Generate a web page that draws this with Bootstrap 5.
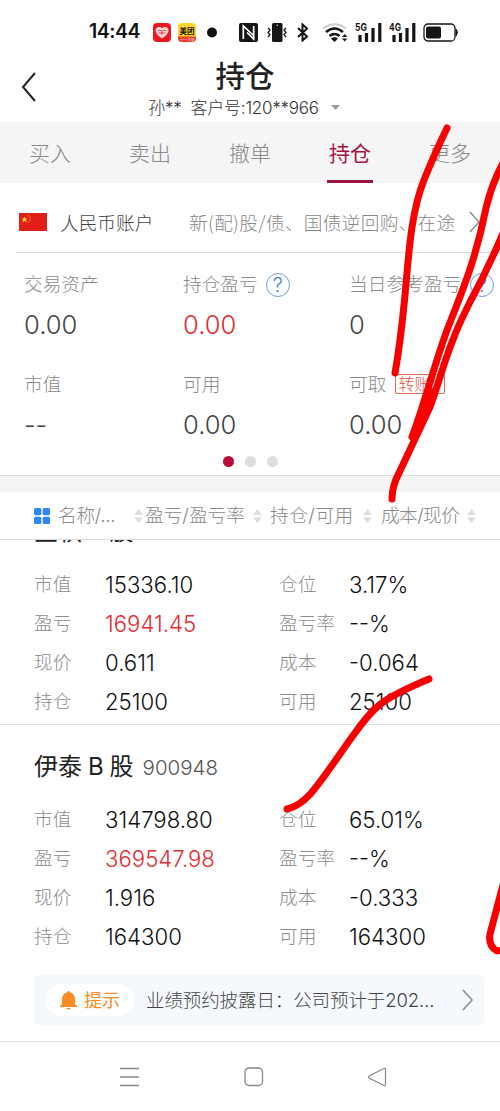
<!DOCTYPE html>
<html lang="zh-CN">
<head>
<meta charset="utf-8">
<meta name="viewport" content="width=device-width, initial-scale=1">
<title>持仓</title>
<link href="https://cdn.jsdelivr.net/npm/bootstrap@5.3.0/dist/css/bootstrap.min.css" rel="stylesheet">
<style>
body{font-family:Inter,"Noto Sans CJK SC",sans-serif;font-weight:300;background:#fff;color:#333;overflow:hidden}
.screen{width:500px;height:1111px;overflow:hidden}
svg{display:block;flex:none}
.cjk{font-family:"Noto Sans CJK SC",sans-serif}
.statusbar{height:60px;padding:4px 0 0 89px}
.clock{font-size:19.5px;font-weight:600;color:#111;width:64px;letter-spacing:-.5px}
.apphead{height:62px}
.back{position:absolute;left:21px;top:12px}
.apphead h1{font-size:29.5px;line-height:30px;font-weight:500;margin:-1px 0 0 -10px;color:#222}
.client{font-size:17px;line-height:20px;margin-top:9px;color:#333;white-space:pre;margin-left:-9px;letter-spacing:-.25px}
.tabs{height:61px;background:#f5f5f5;color:#888;font-size:21px}
.tabs a{flex:1;text-align:center;line-height:61px;height:61px;color:inherit;text-decoration:none}
.tabs a.active{color:#a5123f;font-weight:400}
.tabs a.active::after{content:"";display:block;width:46px;height:3px;margin:-3px auto 0;background:#9b123d}
.account{height:70px;margin-left:16px;border-bottom:1px solid #ddd;padding:9px 0 0 3px;font-size:18.7px;white-space:nowrap}
.summary{height:223px;border-bottom:1px solid #d9d9d9;padding:17px 0 0 24px}
.sumgrid{display:grid;grid-template-columns:159px 166px 151px;row-gap:24px}
.lbl{font-size:18.7px;line-height:30px;height:30px;color:#8a8a8a;white-space:nowrap}
.num{font-size:25.6px;line-height:30px;margin-top:10px;height:30px;color:#444;padding-bottom:6px;box-sizing:content-box}
.up,.num.up{color:#e02d33!important}
.dot{width:11px;height:11px;border-radius:50%;background:#ddd}
.dot.on{background:#bd0b37}
.help{width:24px;height:24px;border:1px solid #6b9be0;border-radius:50%;color:#4a80d8;font-size:20px;line-height:22px;text-align:center;margin-left:8px}
.transfer{border:1px solid #dc6a58;color:#e0543f;font-size:16px;height:20px;line-height:18px;width:50px;padding-left:2px;margin-left:9px;border-radius:2px;margin-top:-2px}
.band{height:16px;background:#f5f5f5}
.cols{height:48px;border-bottom:1px solid #ddd;padding:0 0 0 34px;font-size:18.7px;color:#888;white-space:nowrap}
.cols span{padding-top:2px}
.holding{padding-left:34px}
.cut{height:25px;overflow:hidden}
.cut>div{margin-top:-25px}
.stock{height:34px;line-height:34px}
.stock b{font-size:24px;font-weight:400;color:#222;white-space:pre;word-spacing:-.8px}
.stock span{font-size:20.5px;color:#555;margin-left:9px}
.facts{display:grid;grid-template-columns:71px 174px 70px 1fr;grid-auto-rows:39px;line-height:39px;font-size:22.2px;color:#111;white-space:nowrap}
.facts i{font-style:normal;font-size:18.7px;color:#8c8c8c}
.tip{width:450px;height:50px;margin-left:34px;background:#f5f9fe;border-radius:5px;padding:0 10px 0 12px;white-space:nowrap}
.pill{width:88px;height:32px;border-radius:16px;background:#fff;color:#fb8b24;font-size:18px;font-weight:400;padding-left:14px}
.sysnav{height:69px}
.ink{left:0;top:0;pointer-events:none}
</style>
</head>
<body>
<div class="screen position-relative">
  <div class="statusbar d-flex align-items-center">
    <div class="clock">14:44</div>
    <svg width="18" height="19" viewBox="0 0 18 19"><rect width="18" height="19" rx="4" fill="#ed1721"/><path d="M9 15.500C5 12.500 2.500 10.500 2.500 7.500C2.500 4 7 3 9 5.500C11 3 15.500 4 15.500 7.500C15.500 10.500 13 12.500 9 15.500Z" fill="#ffd9d9"/><path d="M5 7.500h3m2 0h3M5.500 10h7M9 7v5" stroke="#ed1721" stroke-width=".8"/></svg>
    <svg style="margin-left:7px" width="18" height="19" viewBox="0 0 18 19"><rect width="18" height="19" rx="4" fill="#ffd52b"/><path d="M0 13.500h18v1.500q0 4-4 4H4q-4 0-4-4z" fill="#ee3b34"/><text x="1.500" y="11" font-size="7.500" font-weight="700" fill="#111" font-family="Noto Sans CJK SC">美团</text><text x="2" y="17.800" font-size="3.600" fill="#fff" font-family="Noto Sans CJK SC">十一大促</text></svg>
    <svg style="margin-left:11px" width="10" height="19"><circle cx="5" cy="9.500" r="5" fill="#111"/></svg>
    <svg style="margin-left:22px" width="19" height="19" viewBox="0 0 19 19"><rect width="19" height="19" rx="2" fill="#151515"/><path d="M4.300 16V3L14.500 12.500M14.700 3V16L8 9.500" fill="none" stroke="#fff" stroke-width="1.700"/></svg>
    <svg style="margin-left:9px" width="20" height="19" viewBox="0 0 20 19"><rect x="5" width="10.500" height="19" rx="1.500" fill="#151515"/><circle cx="10.200" cy="2.300" r=".7" fill="#fff"/><path d="M1 5l2 2-2 2.500 2 2-2 2.500M19 5l-2 2 2 2.500-2 2 2 2.500" fill="none" stroke="#151515" stroke-width="1.300"/></svg>
    <svg style="margin-left:10px" width="12" height="19" viewBox="0 0 12 19"><path d="M1 5l9 8.500-4.500 4V1.500L10 5.500 1 14" fill="none" stroke="#151515" stroke-width="2"/></svg>
    <svg style="margin-left:13px" width="27" height="19" viewBox="0 0 27 19"><path d="M1 5.500Q12.500-3 24 5.500" fill="none" stroke="#ccc" stroke-width="2"/><path d="M4 9Q12.500 2 21 9M7.500 13Q12.500 9 17.500 13" fill="none" stroke="#151515" stroke-width="2.500"/><path d="M9 15.500q3.500-2.500 7 0L12.500 19zM20 14l2.700-3 2.700 3zM20 15.500l2.700 3 2.700-3z" fill="#151515"/></svg>
    <svg style="margin-left:6px" width="28" height="20" viewBox="0 0 28 20"><text x="0" y="9" font-size="10.500" font-weight="700" textLength="12" lengthAdjust="spacingAndGlyphs" fill="#151515">5G</text><path d="M5 13v7M11.500 11v9M18 6v14M24.800 1v19" stroke="#151515" stroke-width="3.200"/></svg>
    <svg style="margin-left:6px" width="28" height="20" viewBox="0 0 28 20"><text x="0" y="9" font-size="10.500" font-weight="700" textLength="12" lengthAdjust="spacingAndGlyphs" fill="#151515">4G</text><path d="M5 13v7M11.500 11v9M18 6v14M24.800 1v19" stroke="#151515" stroke-width="3.200"/></svg>
    <svg style="margin-left:6px" width="36" height="19" viewBox="0 0 36 19"><rect x="1" y="1" width="31" height="17" rx="4" fill="none" stroke="#151515" stroke-width="1.300"/><rect x="3" y="3.500" width="15" height="12" rx="2" fill="#151515"/><path d="M33 6q3 3.500 0 7z" fill="#151515" stroke="#151515"/></svg>
  </div>

  <header class="apphead position-relative d-flex flex-column align-items-center">
    <svg class="back" width="16" height="30"><path d="M14 1L2 15l12 14" fill="none" stroke="#222" stroke-width="2"/></svg>
    <h1 class="cjk">持仓</h1>
    <div class="client d-flex align-items-center"><span>孙**  客户号:120**966</span><svg class="ms-2" width="16" height="6"><path d="M4 0h9L8.500 5z" fill="#999"/></svg></div>
  </header>

  <nav class="tabs d-flex cjk">
    <a href="#">买入</a><a href="#">卖出</a><a href="#">撤单</a><a href="#" class="active">持仓</a><a href="#">更多</a>
  </nav>

  <div class="account d-flex align-items-center cjk">
    <svg width="28" height="18" viewBox="0 0 28 18"><rect width="28" height="18" fill="#e21f17"/><path d="M5.500 3.500l.8 2 2.200.1-1.700 1.400.6 2.200-1.900-1.300-1.900 1.300.6-2.200-1.700-1.400 2.200-.1z" fill="#ffd54a"/><g fill="#f7a13a"><circle cx="9.500" cy="2.700" r=".7"/><circle cx="11" cy="4.500" r=".7"/><circle cx="11" cy="7" r=".7"/><circle cx="9.500" cy="9" r=".7"/></g></svg>
    <span style="margin-left:13px;color:#444;width:129px">人民币账户</span>
    <span style="color:#888;letter-spacing:.28px">新(配)股/债、国债逆回购、在途</span>
    <svg style="margin-left:13px" width="12" height="22"><path d="M1 1l9 10-9 10" fill="none" stroke="#888" stroke-width="1.300"/></svg>
  </div>

  <section class="summary">
    <div class="sumgrid">
      <div><div class="lbl">交易资产</div><div class="num">0.00</div></div>
      <div><div class="lbl d-flex align-items-center">持仓盈亏<span class="help">?</span></div><div class="num up">0.00</div></div>
      <div><div class="lbl d-flex align-items-center">当日参考盈亏<span class="help" style="margin-left:9px">?</span></div><div class="num">0</div></div>
      <div><div class="lbl">市值</div><div class="num">--</div></div>
      <div><div class="lbl">可用</div><div class="num">0.00</div></div>
      <div><div class="lbl d-flex align-items-center">可取<span class="transfer">转账 ›</span></div><div class="num">0.00</div></div>
    </div>
    <div class="d-flex justify-content-center" style="gap:11px;margin-left:-24px;margin-top:10px"><i class="dot on"></i><i class="dot"></i><i class="dot"></i></div>
  </section>
  <div class="band"></div>

  <div class="cols d-flex align-items-center">
    <svg width="16" height="16" fill="#2f86f6"><rect width="7.300" height="7.300" rx="1.500"/><rect x="8.700" width="7.300" height="7.300" rx="1.500"/><rect y="8.700" width="7.300" height="7.300" rx="1.500"/><rect x="8.700" y="8.700" width="7.300" height="7.300" rx="1.500"/></svg>
    <span style="margin-left:8px;width:76px;letter-spacing:-.3px">名称/...</span>
    <svg width="9" height="14"><path d="M0 6l4.500-6L9 6zM0 8.500h9l-4.500 5.500z" fill="#ddd"/></svg>
    <span style="margin-left:2px;width:108px">盈亏/盈亏率</span>
    <svg width="9" height="14"><path d="M0 6l4.500-6L9 6zM0 8.500h9l-4.500 5.500z" fill="#ddd"/></svg>
    <span style="margin-left:8px;width:93px;letter-spacing:.5px">持仓/可用</span>
    <svg width="9" height="14"><path d="M0 6l4.500-6L9 6zM0 8.500h9l-4.500 5.500z" fill="#ddd"/></svg>
    <span style="margin-left:9px;width:86px;letter-spacing:-.6px">成本/现价</span>
    <svg width="9" height="14"><path d="M0 6l4.500-6L9 6zM0 8.500h9l-4.500 5.500z" fill="#ddd"/></svg>
  </div>

  <section class="holding border-bottom" style="height:185px">
    <div class="cut"><div class="stock"><b>金秋 B 股</b><span>900928</span></div></div>
    <div class="facts">
      <i>市值</i><span>15336.10</span><i>仓位</i><span>3.17%</span>
      <i>盈亏</i><span class="up">16941.45</span><i>盈亏率</i><span>--%</span>
      <i>现价</i><span>0.611</span><i>成本</i><span>-0.064</span>
      <i>持仓</i><span>25100</span><i>可用</i><span>25100</span>
    </div>
  </section>

  <section class="holding" style="height:250px;padding-top:25px">
    <div class="stock" style="margin-bottom:16px"><b>伊泰 B 股</b><span>900948</span></div>
    <div class="facts">
      <i>市值</i><span>314798.80</span><i>仓位</i><span>65.01%</span>
      <i>盈亏</i><span class="up">369547.98</span><i>盈亏率</i><span>--%</span>
      <i>现价</i><span>1.916</span><i>成本</i><span>-0.333</span>
      <i>持仓</i><span>164300</span><i>可用</i><span>164300</span>
    </div>
  </section>

  <div class="border-bottom" style="height:67px">
    <div class="tip d-flex align-items-center">
      <div class="pill d-flex align-items-center"><svg width="17" height="19" viewBox="0 0 17 19"><path d="M8.500 0q1.500 0 1.700 1.500Q15 3 15 8v5l2 2v1H0v-1l2-2V8q0-5 4.800-6.500Q7 0 8.500 0zM6 17h5q-2.500 3-5 0z" fill="#fb8b24"/></svg><span style="margin-left:7px">提示</span></div>
      <span style="margin-left:12px;padding-top:1px;font-size:18.500px;color:#444;letter-spacing:-.1px">业绩预约披露日：公司预计于202...</span>
      <svg class="ms-auto" width="12" height="22"><path d="M1 1l9 10-9 10" fill="none" stroke="#888" stroke-width="1.500"/></svg>
    </div>
  </div>

  <nav class="sysnav d-flex align-items-center">
    <svg style="margin-left:120px" width="20" height="20"><path d="M0 1.500h19M0 10h19M0 18.500h19" stroke="#888" stroke-width="1.300"/></svg>
    <svg style="margin-left:104px" width="20" height="20"><rect x="1" y="1" width="17.500" height="17.500" rx="4" fill="none" stroke="#888" stroke-width="1.300"/></svg>
    <svg style="margin-left:103px" width="20" height="20"><path d="M2 9Q1 10 2 11L17 18.500Q18.500 19 18.500 17.500V2.500Q18.500 1 17 1.500Z" fill="none" stroke="#888" stroke-width="1.200"/></svg>
  </nav>

  <svg class="ink position-absolute" width="500" height="1111" fill="none" stroke="#f80000" stroke-width="7" stroke-linecap="round" stroke-linejoin="round">
    <path d="M447 128Q434 155 424 180C409 217 408 270 404 305Q400 345 395 373"/>
    <path d="M503 163Q492 183 486 208C476 258 464 287 449 325C436 358 426 400 412 437"/>
    <path d="M503 233Q488 269 470 302C447 347 443 371 430 407L399 473Q392 486 392 499"/>
    <path d="M432 390L414 437L429 410L435 390Z" fill="#f80000" stroke-width="4"/>
    <path d="M429 679C381 699 374 706 352 737C317 786 307 805 287 809"/>
    <path d="M503 885L490 934Q488 946 497 951L504 950"/>
  </svg>
</div>
<script src="https://cdn.jsdelivr.net/npm/bootstrap@5.3.0/dist/js/bootstrap.bundle.min.js"></script>
</body>
</html>
